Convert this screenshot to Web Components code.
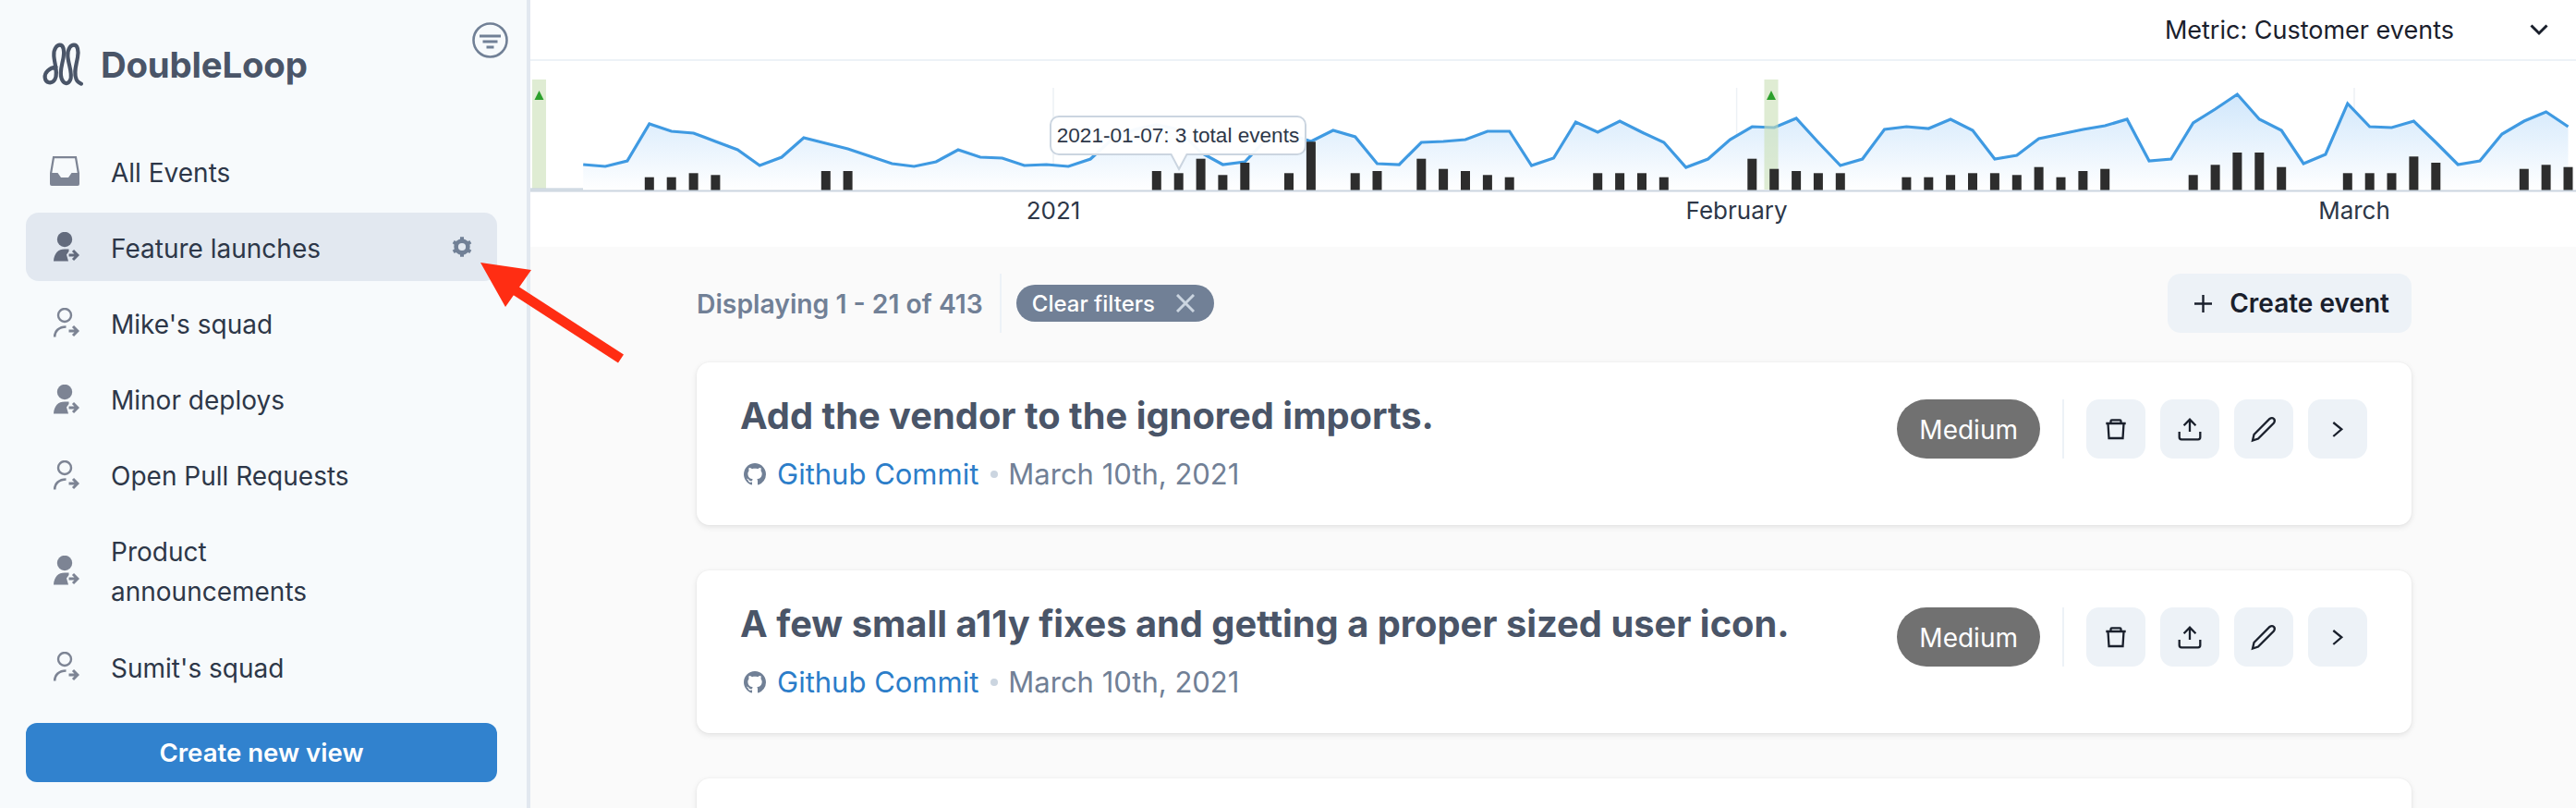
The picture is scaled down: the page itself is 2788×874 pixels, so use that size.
<!DOCTYPE html>
<html lang="en">
<head>
<meta charset="utf-8">
<title>DoubleLoop</title>
<style>
  html, body { margin: 0; height: 874px; overflow: hidden; background: #fff; }
  body { font-family: Inter, "Liberation Sans", sans-serif; color: #2d3748; }
</style>
</head>
<body>
<dl-app>
  <dl-sidebar slot="sidebar">
    <dl-nav-item icon="inbox">All Events</dl-nav-item>
    <dl-nav-item icon="solid" active>Feature launches</dl-nav-item>
    <dl-nav-item icon="outline">Mike's squad</dl-nav-item>
    <dl-nav-item icon="solid">Minor deploys</dl-nav-item>
    <dl-nav-item icon="outline">Open Pull Requests</dl-nav-item>
    <dl-nav-item icon="solid">Product announcements</dl-nav-item>
    <dl-nav-item icon="outline">Sumit's squad</dl-nav-item>
  </dl-sidebar>
  <dl-topbar slot="main">Metric: Customer events</dl-topbar>
  <dl-chart slot="main"></dl-chart>
  <dl-content slot="main">
    <dl-toolbar></dl-toolbar>
    <dl-event-card heading="Add the vendor to the ignored imports." date="March 10th, 2021"></dl-event-card>
    <dl-event-card heading="A few small a11y fixes and getting a proper sized user icon." date="March 10th, 2021"></dl-event-card>
    <dl-event-card></dl-event-card>
  </dl-content>
</dl-app>

<script>
const FONT = 'Inter, "Liberation Sans", sans-serif';

class DlApp extends HTMLElement {
  constructor() {
    super();
    this.attachShadow({ mode: 'open' });
    this.shadowRoot.innerHTML = `
      <style>
        :host { display: flex; position: relative; width: 2788px; height: 874px; overflow: hidden; font-family: ${FONT}; }
        .main { flex: 1; display: flex; flex-direction: column; min-width: 0; }
        .arrow { position: absolute; left: 0; top: 0; pointer-events: none; }
      </style>
      <slot name="sidebar"></slot>
      <div class="main"><slot name="main"></slot></div>
      <svg class="arrow" width="700" height="400" viewBox="0 0 700 400">
        <path d="M556 313 L672 388" stroke="#ff2d13" stroke-width="11" fill="none"/>
        <path d="M520 284 L575 292 L547 332 Z" fill="#ff2d13"/>
      </svg>
    `;
  }
}

class DlSidebar extends HTMLElement {
  constructor() {
    super();
    this.attachShadow({ mode: 'open' });
    this.shadowRoot.innerHTML = `
      <style>
        :host { display: flex; flex-direction: column; box-sizing: border-box; width: 574px; height: 874px; padding: 24px 0 0; background: #f7fafc; border-right: 4px solid #e2e8f0; }
        .head { display: flex; align-items: flex-start; height: 76px; }
        .logo { display: flex; align-items: center; gap: 9px; margin: 16px 0 0 40px; }
        .name { font-size: 38.4px; font-weight: 700; color: #4a5568; line-height: 60px; letter-spacing: -0.2px; }
        .filter { margin: 0 20px 0 auto; display: block; }
        nav { display: flex; flex-direction: column; gap: 8.2px; margin-top: 48px; padding: 0 32px 0 28px; }
        button { margin: 24px 32px 0 28px; height: 64px; border: 0; border-radius: 12px; background: #3182ce; color: #fff; font: 600 27.6px ${FONT}; }
      </style>
      <div class="head">
        <div class="logo">
          <svg width="60" height="60" viewBox="0 0 180 180" fill="none" stroke="#4a5568" stroke-width="12.5" stroke-linecap="round">
            <path d="M62 98C40 100 24 115 26 132C28 150 48 154 58 138C70 120 56 85 55 60C54 36 66 26 74 26C86 26 90 44 86 66C82 90 72 115 80 135C86 152 100 156 108 140C118 120 100 85 100 60C100 36 110 26 120 26C132 26 136 44 132 66C128 90 118 118 128 138C132 147 138 150 144 152"/>
          </svg>
          <span class="name">DoubleLoop</span>
        </div>
        <svg class="filter" width="39" height="39" viewBox="0 0 39 39" fill="none" stroke="#718096">
          <ellipse cx="19.5" cy="19.5" rx="18" ry="18" stroke-width="2.6"/>
          <path d="M8 15H31M11.5 21H27.5M15.5 27H23.5" stroke-width="3"/>
        </svg>
      </div>
      <nav><slot></slot></nav>
      <button type="button">Create new view</button>
    `;
  }
}

const NAV_ICONS = {
  inbox: `<path d="M0 18H8.5L12 23H20L23.5 18H32V30a2 2 0 0 1-2 2H2a2 2 0 0 1-2-2Z" fill="currentColor"/><path d="M1 19L4 1.2H28L31 19" fill="none" stroke="currentColor" stroke-width="2.2"/>`,
  solid: `<circle cx="16" cy="8" r="8.2" fill="currentColor"/><path d="M4 31.5C4.5 23 9 18.5 16 18.5H20.5V21L18 24.5L20 31.5Z" fill="currentColor"/><path d="M20.5 25H29M25 20L30 25L25 30" fill="none" stroke="currentColor" stroke-width="3"/>`,
  outline: `<circle cx="16" cy="8" r="7" fill="none" stroke="currentColor" stroke-width="2.4"/><path d="M5.2 31.5C5.2 25 10 20.5 17.5 20.5" fill="none" stroke="currentColor" stroke-width="2.6"/><path d="M20.5 25H29M25 20L30 25L25 30" fill="none" stroke="currentColor" stroke-width="3"/>`
};

class DlNavItem extends HTMLElement {
  constructor() {
    super();
    this.attachShadow({ mode: 'open' });
  }

  connectedCallback() {
    const active = this.hasAttribute('active');
    const icon = NAV_ICONS[this.getAttribute('icon')] || '';
    const gear = active ? `
      <svg class="gear" width="22" height="22" viewBox="0 0 22 22" fill="none" stroke="#718096">
        <circle cx="11" cy="11" r="6.4" stroke-width="4.6"/>
        <path d="M11 .3V4M11 18V21.7M1.7 5.6L4.9 7.5M17.1 14.5L20.3 16.4M1.7 16.4L4.9 14.5M17.1 7.5L20.3 5.6" stroke-width="4"/>
      </svg>` : '';
    this.shadowRoot.innerHTML = `
      <style>
        :host { display: flex; align-items: center; box-sizing: border-box; min-height: 74px; padding: 0 27px 0 26px; border-radius: 14px; font-size: 28px; line-height: 43px; color: #2d3748; }
        :host([active]) { background: #e2e8f0; }
        svg.ic { flex: none; color: #7d8494; margin-right: 34px; }
        :host([active]) svg.ic { color: #636b7d; }
        .label { flex: 1; min-width: 0; max-width: 300px; padding: 17.5px 0 13.5px; }
        .gear { flex: none; margin-left: auto; }
      </style>
      <svg class="ic" width="32" height="32" viewBox="0 0 32 32">${icon}</svg>
      <span class="label"><slot></slot></span>
      ${gear}
    `;
  }
}

class DlTopbar extends HTMLElement {
  constructor() {
    super();
    this.attachShadow({ mode: 'open' });
    this.shadowRoot.innerHTML = `
      <style>
        :host { display: flex; align-items: center; justify-content: flex-end; gap: 82px; box-sizing: border-box; height: 66px; padding: 0 30px 0 0; background: #fff; border-bottom: 2px solid #edf2f7; font-size: 27px; color: #1a202c; }
      </style>
      <span><slot></slot></span>
      <svg width="20" height="14" viewBox="0 0 20 14" fill="none" stroke="#1a202c" stroke-width="3"><path d="M1.5 2.5L10 11L18.5 2.5"/></svg>
    `;
  }
}

const LINE = [178,180,174,134,142,144,153,162,179,170,149,155,161,169,177,180,175,162,170,171,179,178,180,172,
  150,140,135,140,165,178,175,150,145,153,141,148,177,178,154,153,151,142,142,179,171,132,143,131,143,154,181,172,151,137,138,128,154,179,172,140,137,139,
  129,141,172,168,150,145,140,136,129,174,172,133,118,102,129,141,177,167,112,137,138,131,154,178,174,145,131,121,137];

const BARS = { 3:575,4:575,5:562,6:568,11:555,12:555,26:555,27:562,28:515,29:568,30:528,32:562,33:460,35:562,36:555,38:515,39:548,40:555,41:568,42:575,
  46:562,47:562,48:562,49:575,53:515,54:548,55:555,56:562,57:562,60:575,61:575,62:568,63:562,64:562,65:568,66:542,67:575,68:555,69:548,
  73:568,74:535,75:495,76:495,77:542,80:562,81:562,82:562,83:508,84:528,88:548,89:535,90:542 };

const xAt = i => 631.2 + 23.87 * i;

class DlChart extends HTMLElement {
  constructor() {
    super();
    this.attachShadow({ mode: 'open' });
    const pts = LINE.map((y, i) => `${xAt(i).toFixed(1)},${y}`).join(' ');
    const bars = Object.entries(BARS).map(([i, top]) => {
      const y = top / 3;
      return `<rect x="${(xAt(+i) - 5).toFixed(1)}" y="${y.toFixed(1)}" width="10" height="${(206 - y).toFixed(1)}"/>`;
    }).join('');
    const ticks = [1140, 1879.6, 2548].map(x => `<path d="M${x} 95V207"/>`).join('');
    const bands = [583.5, 1917].map(x => `
      <rect x="${x - 7.5}" y="86" width="15" height="119" fill="#c9dfb5" fill-opacity=".6"/>
      <path d="M${x} 98L${x + 5} 108H${x - 5}Z" fill="#2ca02c"/>`).join('');
    this.shadowRoot.innerHTML = `
      <style>
        :host { display: block; position: relative; height: 201px; flex: none; background: #fff; }
        svg.plot { display: block; }
        text { font: 26px ${FONT}; fill: #2d3748; text-anchor: middle; }
        .tip { position: absolute; left: 562px; top: 59px; box-sizing: border-box; width: 278px; height: 43px; display: flex; align-items: center; justify-content: center; background: rgba(255,255,255,.96); border: 2px solid #cbd5e0; border-radius: 10px; font: 22.6px "Liberation Sans", Arial, sans-serif; color: #2d3748; white-space: nowrap; }
        .peak { position: absolute; left: 692px; top: 100px; }
      </style>
      <svg class="plot" width="2214" height="201" viewBox="574 66 2214 201">
        <defs>
          <linearGradient id="fade" gradientUnits="userSpaceOnUse" x1="0" y1="100" x2="0" y2="207">
            <stop offset="0" stop-color="#cfe6fb"/>
            <stop offset="1" stop-color="#ffffff"/>
          </linearGradient>
        </defs>
        <g stroke="#edf1f5" stroke-width="1.5">${ticks}</g>
        <polygon points="${xAt(0)},206 ${pts} ${xAt(90)},206" fill="url(#fade)"/>
        <polyline points="${pts}" fill="none" stroke="#3f9ae2" stroke-width="3.2"/>
        ${bands}
        <g fill="#2d2d2d">${bars}</g>
        <rect x="574" y="205.5" width="2214" height="2" fill="#cbd5e0"/>
        <rect x="574" y="203.5" width="57" height="2" fill="#cbd5e0"/>
        <text x="1140" y="237">2021</text>
        <text x="1879.6" y="237">February</text>
        <text x="2548" y="237">March</text>
      </svg>
      <div class="tip">2021-01-07: 3 total events</div>
      <svg class="peak" width="20" height="20" viewBox="0 0 20 20"><path d="M1 0L10 17L19 0" fill="#fff" stroke="#cbd5e0" stroke-width="2"/></svg>
    `;
  }
}

class DlContent extends HTMLElement {
  constructor() {
    super();
    this.attachShadow({ mode: 'open' });
    this.shadowRoot.innerHTML = `
      <style>
        :host { display: flex; flex-direction: column; gap: 49px; flex: 1; box-sizing: border-box; padding: 29px 178px 0 180px; background: #fafafa; overflow: hidden; }
      </style>
      <slot></slot>
    `;
  }
}

class DlToolbar extends HTMLElement {
  constructor() {
    super();
    this.attachShadow({ mode: 'open' });
    this.shadowRoot.innerHTML = `
      <style>
        :host { display: flex; align-items: center; flex: none; height: 64px; margin-bottom: -17px; }
        .count { padding-top: 2px; font-size: 28.3px; font-weight: 600; color: #718096; }
        .rule { width: 2px; height: 64px; margin: 0 16px 0 18px; background: #edf2f7; }
        .pill { display: flex; align-items: center; gap: 23px; box-sizing: border-box; height: 40px; padding: 0 21px 0 17px; border-radius: 20px; background: #718096; color: #fff; font-size: 24px; font-weight: 500; }
        .create { display: flex; align-items: center; gap: 19px; box-sizing: border-box; height: 64px; margin-left: auto; padding: 0 24px 0 29px; border: 0; border-radius: 14px; background: #edf2f7; color: #1a202c; font: 600 28px ${FONT}; }
      </style>
      <span class="count">Displaying 1 - 21 of 413</span>
      <span class="rule"></span>
      <span class="pill">Clear filters
        <svg width="20" height="20" viewBox="0 0 20 20" stroke="#cbd5e0" stroke-width="3"><path d="M1 1L19 19M19 1L1 19"/></svg>
      </span>
      <button class="create" type="button">
        <svg width="19" height="19" viewBox="0 0 19 19" stroke="#1a202c" stroke-width="2.4"><path d="M9.5 0V19M0 9.5H19"/></svg>
        Create event
      </button>
    `;
  }
}

const GITHUB = 'M8 0C3.58 0 0 3.58 0 8c0 3.54 2.29 6.53 5.47 7.59.4.07.55-.17.55-.38 0-.19-.01-.82-.01-1.49-2.01.37-2.53-.49-2.69-.94-.09-.23-.48-.94-.82-1.13-.28-.15-.68-.52-.01-.53.63-.01 1.08.58 1.23.82.72 1.21 1.87.87 2.33.66.07-.52.28-.87.51-1.07-1.78-.2-3.64-.89-3.64-3.95 0-.87.31-1.59.82-2.15-.08-.2-.36-1.02.08-2.12 0 0 .67-.21 2.2.82.64-.18 1.32-.27 2-.27.68 0 1.36.09 2 .27 1.53-1.04 2.2-.82 2.2-.82.44 1.1.16 1.92.08 2.12.51.56.82 1.27.82 2.15 0 3.07-1.87 3.75-3.65 3.95.29.25.54.73.54 1.48 0 1.07-.01 1.93-.01 2.2 0 .21.15.46.55.38A8.013 8.013 0 0016 8c0-4.42-3.58-8-8-8z';

class DlIconButton extends HTMLElement {
  constructor() {
    super();
    this.attachShadow({ mode: 'open' });
    this.shadowRoot.innerHTML = `
      <style>
        :host { display: flex; align-items: center; justify-content: center; flex: none; width: 64px; height: 64px; border-radius: 14px; background: #edf2f7; }
      </style>
      <slot></slot>
    `;
  }
}

class DlEventCard extends HTMLElement {
  constructor() {
    super();
    this.attachShadow({ mode: 'open' });
  }

  connectedCallback() {
    const heading = this.getAttribute('heading');
    const style = `
      <style>
        :host { display: flex; flex: none; box-sizing: border-box; height: 176px; padding: 40px 48px 40px 47px; background: #fff; border-radius: 14px; box-shadow: 0 2px 6px rgba(0,0,0,.1), 0 0 2px rgba(0,0,0,.05); }
        .left { flex: 1; min-width: 0; }
        h2 { margin: 0; font-size: 39.85px; line-height: 36px; font-weight: 700; color: #4a5568; white-space: nowrap; }
        .sub { display: flex; align-items: center; margin-top: 27px; font-size: 31px; line-height: 36px; color: #718096; }
        .sub svg { margin: 0 12px 0 4px; }
        .sub a { color: #2b7dc9; }
        .dot { width: 8px; height: 8px; margin: 0 11px 0 13px; border-radius: 50%; background: #cbd5e0; }
        .right { display: flex; align-items: center; gap: 16px; height: 64px; }
        .level { display: flex; align-items: center; height: 64px; box-sizing: border-box; padding: 2px 24px 0; border-radius: 32px; background: #717171; color: #fff; font-size: 28px; }
        .rule { width: 2px; height: 64px; margin: 0 8px; background: #edf2f7; }
        dl-icon-button svg { display: block; fill: none; stroke: #1a202c; stroke-width: 2.3; }
      </style>`;
    if (!heading) {
      this.shadowRoot.innerHTML = style;
      return;
    }
    this.shadowRoot.innerHTML = `${style}
      <div class="left">
        <h2>${heading}</h2>
        <div class="sub">
          <svg width="24" height="24" viewBox="0 0 16 16"><path fill="#718096" fill-rule="evenodd" d="${GITHUB}"/></svg>
          <a>Github Commit</a><span class="dot"></span><span>${this.getAttribute('date')}</span>
        </div>
      </div>
      <div class="right">
        <span class="level">Medium</span>
        <span class="rule"></span>
        <dl-icon-button><svg width="32" height="32" viewBox="0 0 32 32"><path d="M5.3 10H26.7M10.5 10V7.5Q10.5 6.3 11.7 6.3H20.3Q21.5 6.3 21.5 7.5V10M7.5 10L8.5 26H23.5L24.5 10"/></svg></dl-icon-button>
        <dl-icon-button><svg width="32" height="32" viewBox="0 0 32 32"><path d="M16 5.7V19M9.6 12.2L16 5.7L22.4 12.2M4.7 19V25Q4.7 27.3 7 27.3H25Q27.3 27.3 27.3 25V19"/></svg></dl-icon-button>
        <dl-icon-button><svg width="32" height="32" viewBox="0 0 32 32"><path d="M4 28.5L5.5 22L22.5 5Q25 3.2 27 5Q28.7 7 27 9.5L10 26.5Z"/></svg></dl-icon-button>
        <dl-icon-button><svg width="32" height="32" viewBox="0 0 32 32"><path d="M11.3 9L20.3 16.3L11.3 24"/></svg></dl-icon-button>
      </div>
    `;
  }
}

customElements.define('dl-app', DlApp);
customElements.define('dl-sidebar', DlSidebar);
customElements.define('dl-nav-item', DlNavItem);
customElements.define('dl-topbar', DlTopbar);
customElements.define('dl-chart', DlChart);
customElements.define('dl-content', DlContent);
customElements.define('dl-toolbar', DlToolbar);
customElements.define('dl-icon-button', DlIconButton);
customElements.define('dl-event-card', DlEventCard);
</script>
</body>
</html>
